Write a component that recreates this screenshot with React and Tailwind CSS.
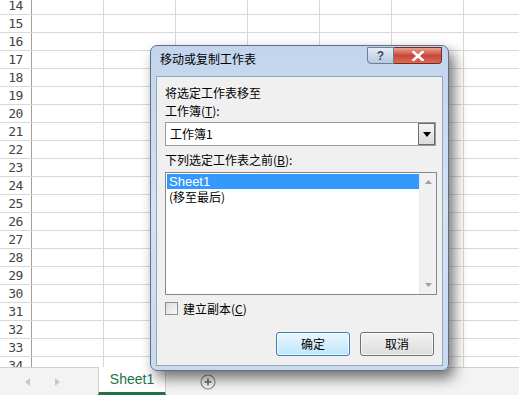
import { useState } from 'react'

// ── Sheet geometry ──────────────────────────────────────────────────────────
const ROWS = Array.from({ length: 21 }, (_, i) => 14 + i)
const COLS = 7

const cjk = { fontFamily: '"Noto Sans CJK SC", "Liberation Sans", sans-serif' }

function SheetGrid() {
  return (
    <div className="h-[367px] overflow-hidden bg-white">
      <div className="-mt-[3px]">
        {ROWS.map(n => (
          <div key={n} className="flex h-[18px] border-b border-[#d8d8d8]">
            <div className="w-[32px] shrink-0 border-r border-[#9e9e9e] flex items-center justify-center text-[13px] text-[#444] leading-none"
              style={{ fontFamily: '"DejaVu Sans Mono", monospace', letterSpacing: '-0.5px' }}>
              {n}
            </div>
            {Array.from({ length: COLS }, (_, c) => (
              <div key={c} className="w-[72px] shrink-0 border-r border-[#d8d8d8]" />
            ))}
          </div>
        ))}
      </div>
    </div>
  )
}

function TabBar() {
  return (
    <div className="h-[28px] bg-[#f3f3f3] border-t border-[#d0d0d0] flex items-stretch">
      <div className="w-[98px] flex items-center">
        <svg width="6" height="8" viewBox="0 0 6 8" className="ml-[25px]"><path d="M5 0L0 4l5 4z" fill="#c8c8c8" /></svg>
        <svg width="6" height="8" viewBox="0 0 6 8" className="ml-[23px]"><path d="M1 0l5 4-5 4z" fill="#c8c8c8" /></svg>
      </div>
      <div className="w-[68px] -mt-px bg-white border-x border-[#d0d0d0] border-b-[3px] border-b-[#217346] flex items-center justify-center text-[14px] text-[#217346]"
        style={{ fontFamily: '"Liberation Sans", sans-serif' }}>
        Sheet1
      </div>
      <div className="flex items-center ml-[34px]">
        <svg width="16" height="16" viewBox="0 0 16 16">
          <circle cx="8" cy="8" r="7" fill="none" stroke="#8a8a8a" strokeWidth="1.2" />
          <path d="M8 4.5v7M4.5 8h7" stroke="#6a6a6a" strokeWidth="1.6" />
        </svg>
      </div>
    </div>
  )
}

// ── Move / copy dialog ──────────────────────────────────────────────────────
function Dialog() {
  const [copy, setCopy] = useState(false)

  return (
    <div className="absolute left-[150px] top-[45px] w-[299px] h-[326px] rounded-[7px] border border-[#5d6f86] bg-gradient-to-b from-[#c2d5ec] via-[#d4e2f3] to-[#c9daee] shadow-[5px_7px_14px_rgba(0,0,0,0.55)] flex flex-col"
      style={cjk}>
      {/* title bar */}
      <div className="h-[30px] flex items-start relative">
        <span className="ml-[9px] mt-[7px] text-[12px] text-black leading-none">移动或复制工作表</span>
        <div className="absolute right-[6px] top-[1px] flex">
          <div className="w-[27px] h-[17px] rounded-bl-[4px] border border-[#6b7f98] bg-gradient-to-b from-[#e4ecf6] to-[#b8c9de] flex items-center justify-center text-[12px] font-bold text-[#3a4a60] leading-none"
            style={{ fontFamily: '"Liberation Sans", sans-serif' }}>
            ?
          </div>
          <div className="w-[48px] h-[17px] rounded-br-[4px] border border-l-0 border-[#7a2a22] bg-gradient-to-b from-[#e8a191] via-[#c8473a] to-[#d86a56] flex items-center justify-center">
            <svg width="12" height="10" viewBox="0 0 12 10">
              <path d="M1.5 1l9 8M10.5 1l-9 8" stroke="#fff" strokeWidth="2.6" strokeLinecap="square" />
            </svg>
          </div>
        </div>
      </div>

      {/* client area */}
      <div className="mx-[5px] mb-[4px] flex-1 bg-[#f0f0f0] border border-[#94a6bd] px-[8px] text-[12px] text-black leading-none">
        <div className="mt-[10px]">将选定工作表移至</div>
        <div className="mt-[6px]">工作簿(<span className="underline">T</span>):</div>

        <div className="mt-[5px] h-[24px] w-[271px] bg-white border border-[#9b9b9b] flex items-center">
          <span className="ml-[4px] flex-1">工作簿1</span>
          <div className="w-[17px] h-[22px] border border-[#6b6b6b] bg-gradient-to-b from-[#f4f4f4] to-[#dcdcdc] flex items-center justify-center">
            <svg width="8" height="5" viewBox="0 0 8 5"><path d="M0 0h8L4 5z" fill="#000" /></svg>
          </div>
        </div>

        <div className="mt-[8px]">下列选定工作表之前(<span className="underline">B</span>):</div>

        <div className="mt-[6px] h-[123px] w-[272px] bg-white border border-[#828790] flex">
          <div className="flex-1 pt-[1px] pl-[1px]">
            <div className="h-[15px] bg-[#3399ff] text-white flex items-center pl-[2px] text-[13px]"
              style={{ fontFamily: '"Liberation Sans", sans-serif' }}>Sheet1</div>
            <div className="h-[15px] flex items-center pl-[2px]">(移至最后)</div>
          </div>
          <div className="w-[17px] bg-[#f0f0f0] border-l border-[#e8e8e8] flex flex-col justify-between items-center py-[7px]">
            <svg width="7" height="4" viewBox="0 0 7 4"><path d="M0 4h7L3.5 0z" fill="#a0a0a0" /></svg>
            <svg width="7" height="4" viewBox="0 0 7 4"><path d="M0 0h7L3.5 4z" fill="#a0a0a0" /></svg>
          </div>
        </div>

        <label className="mt-[7px] flex items-center gap-[5px] cursor-pointer">
          <span onClick={() => setCopy(!copy)}
            className="w-[13px] h-[13px] border border-[#8e8f8f] bg-gradient-to-br from-[#dcdcdc] to-[#f8f8f8] flex items-center justify-center text-[10px]">
            {copy ? '✓' : ''}
          </span>
          <span>建立副本(<span className="underline">C</span>)</span>
        </label>

        <div className="mt-[17px] flex justify-end gap-[10px]">
          <button className="w-[74px] h-[24px] rounded-[3px] border border-[#3c7fb1] bg-gradient-to-b from-[#eaf6fd] to-[#bee6fd] shadow-[inset_0_0_0_1px_rgba(255,255,255,0.7)] text-[12px]">
            确定
          </button>
          <button className="w-[74px] h-[24px] rounded-[3px] border border-[#707070] bg-gradient-to-b from-[#f2f2f2] to-[#dddddd] shadow-[inset_0_0_0_1px_rgba(255,255,255,0.7)] text-[12px]">
            取消
          </button>
        </div>
      </div>
    </div>
  )
}

export default function App() {
  return (
    <div className="relative w-[519px] h-[395px] overflow-hidden bg-white">
      <SheetGrid />
      <TabBar />
      <Dialog />
    </div>
  )
}
